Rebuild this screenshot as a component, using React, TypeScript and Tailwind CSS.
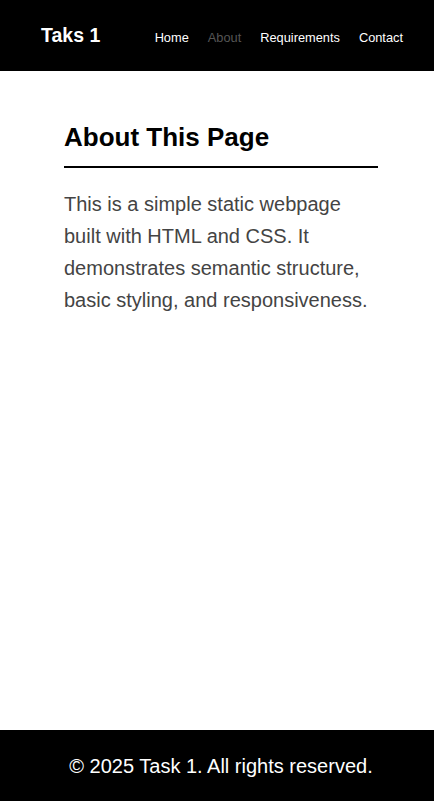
export default function App() {
  return (
    <div className="flex min-h-screen flex-col bg-white font-['Liberation_Sans',Arial,sans-serif]">
      {/* Header */}
      <header className="flex h-[71px] items-center bg-black pl-[41px] pr-[31px]">
        <div className="flex w-full items-baseline justify-between">
          <div className="text-[19.5px] font-bold text-white">Taks 1</div>
          <nav className="flex items-baseline gap-[19px] text-[12.8px]">
            <a href="#" className="text-white">Home</a>
            <a href="#" className="text-[#555555]">About</a>
            <a href="#" className="text-white">Requirements</a>
            <a href="#" className="text-white">Contact</a>
          </nav>
        </div>
      </header>

      {/* Main */}
      <main className="flex-1 pl-[64px] pr-[56px] pt-[52px]">
        <h1 className="border-b-2 border-black pb-[14px] text-[26px] font-bold leading-[29px] text-black">
          About This Page
        </h1>
        <p className="mt-[20px] text-[20px] leading-[32px] text-[#444444]">
          This is a simple static webpage built with HTML and CSS. It demonstrates semantic structure, basic styling, and responsiveness.
        </p>
      </main>

      {/* Footer */}
      <footer className="flex h-[71px] items-center justify-center bg-black pl-[8px]">
        <p className="text-[20px] text-white">© 2025 Task 1. All rights reserved.</p>
      </footer>
    </div>
  );
}
